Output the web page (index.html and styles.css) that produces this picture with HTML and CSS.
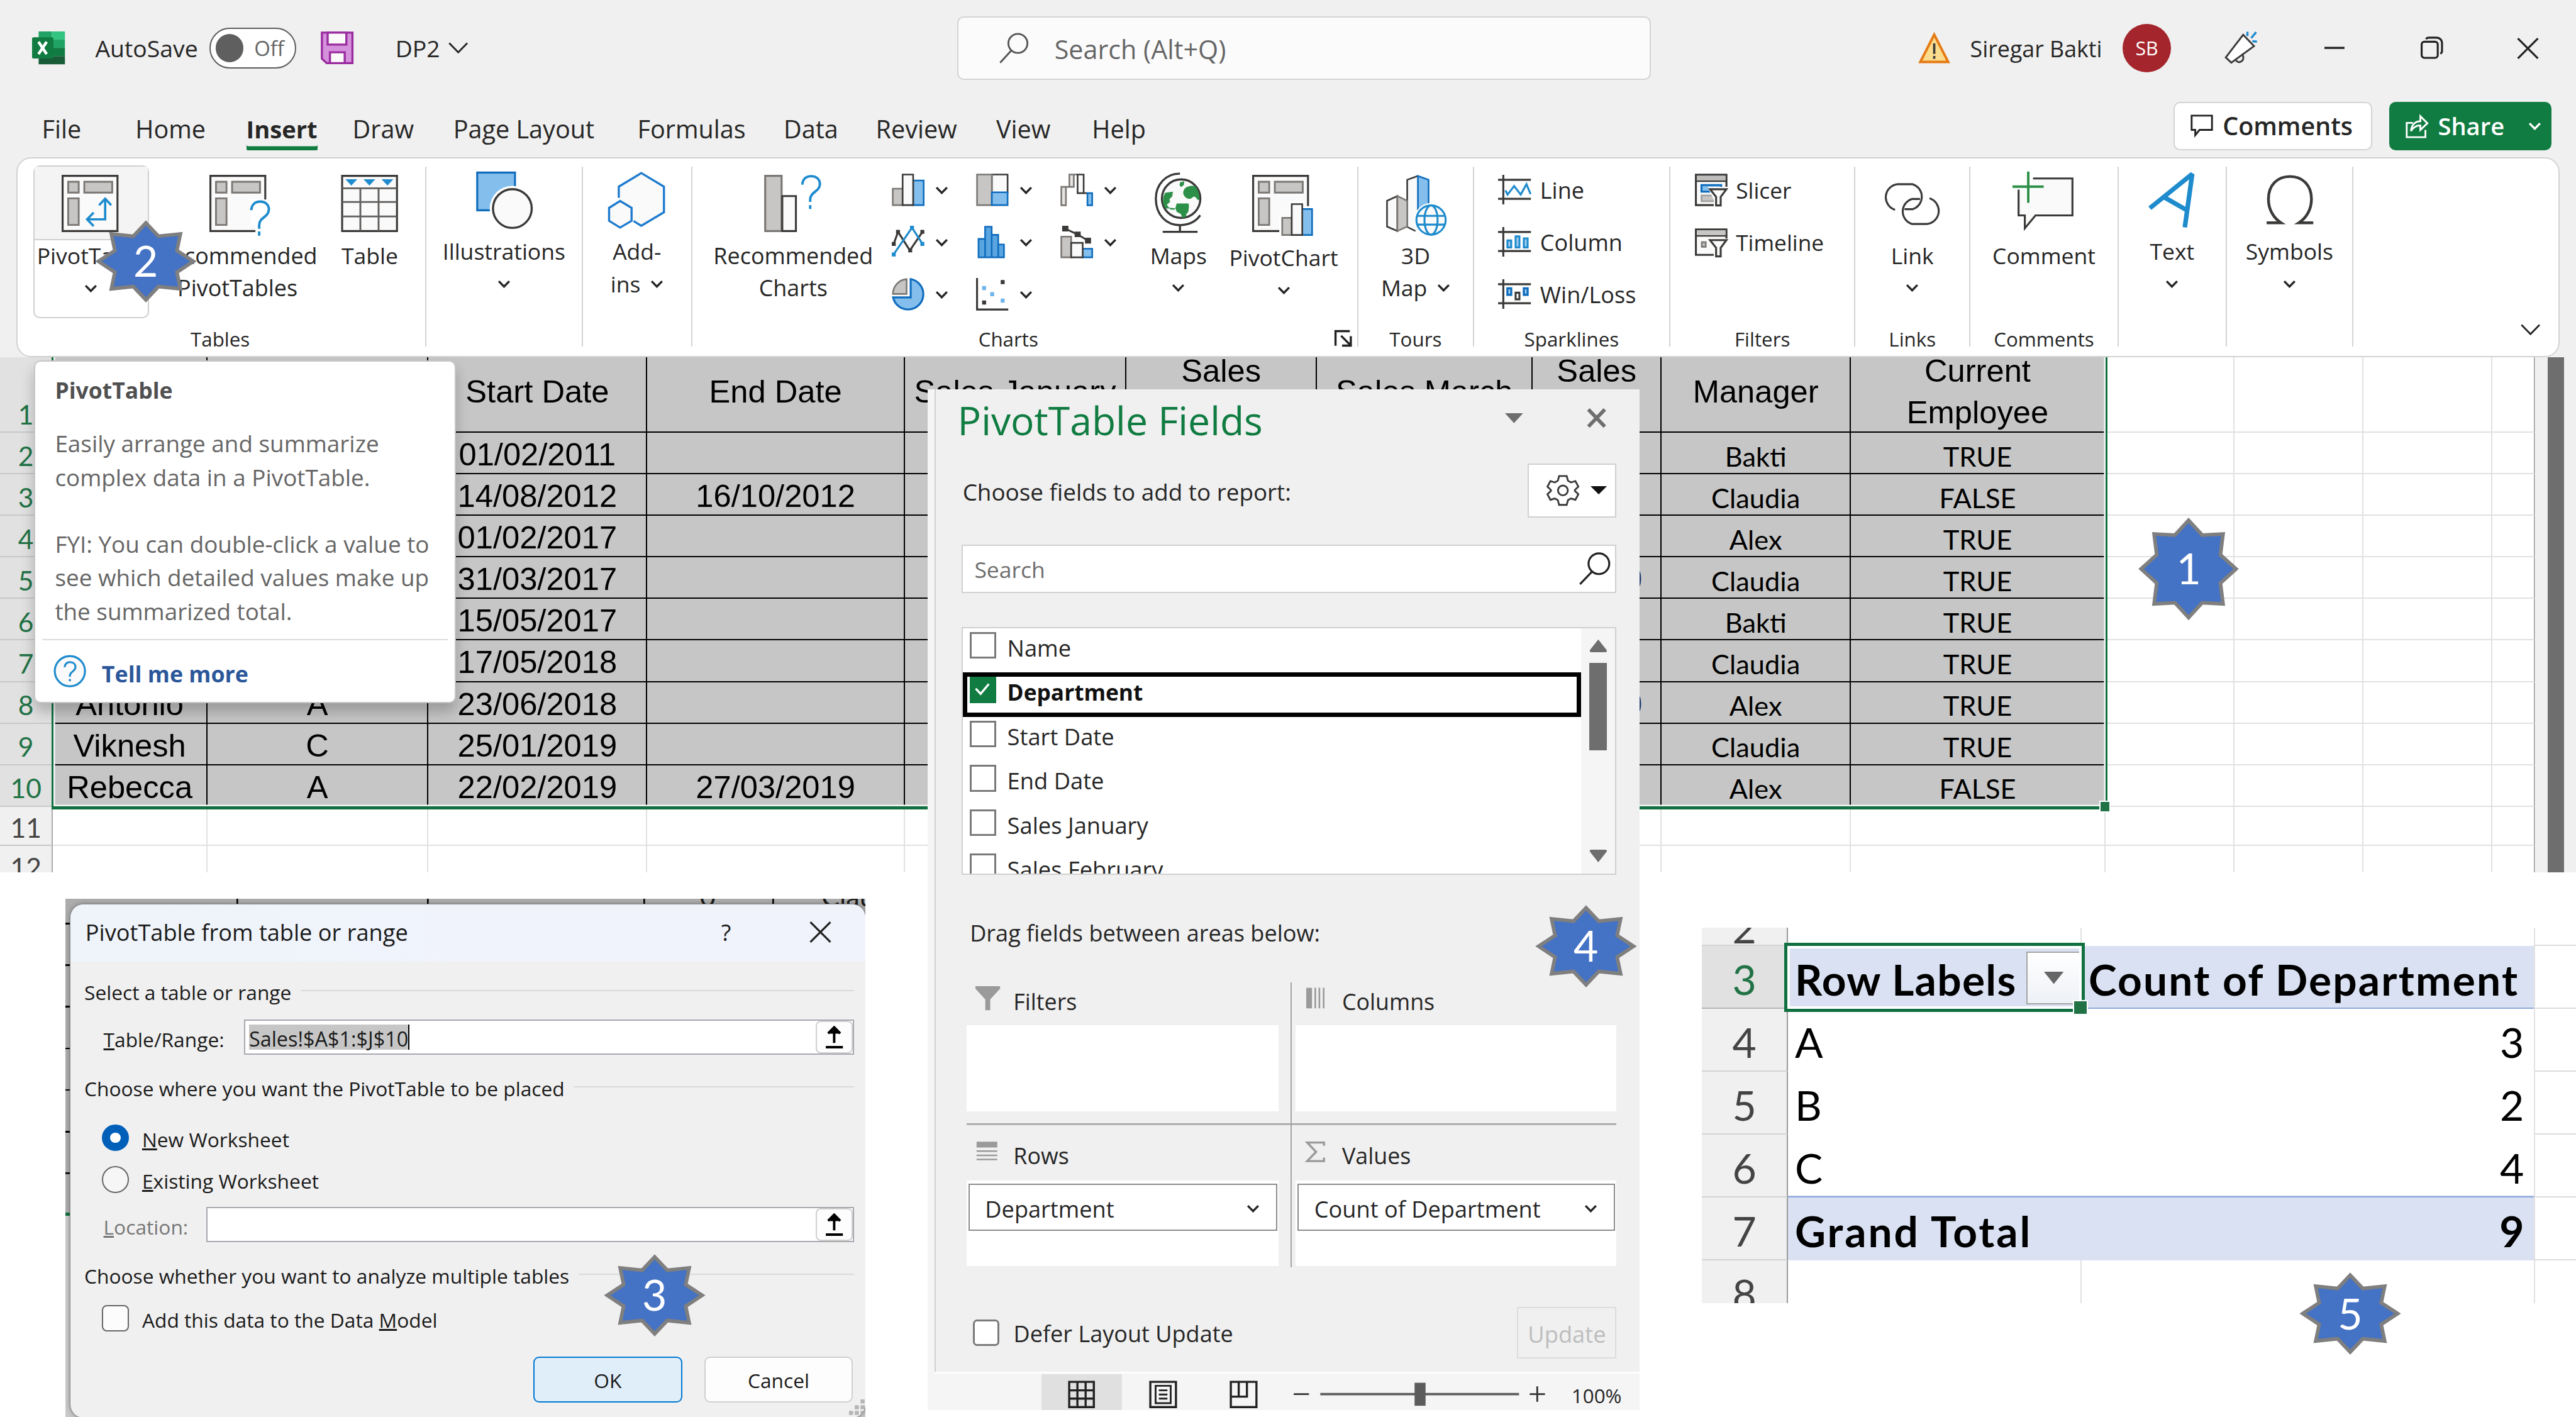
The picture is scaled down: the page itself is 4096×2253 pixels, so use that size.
FILE: index.html
```html
<!DOCTYPE html>
<html lang="en">
<head>
<meta charset="utf-8">
<title>DP2 - Excel</title>
<link rel="stylesheet" href="styles.css">
</head>
<body>
<svg class="defs" width="0" height="0">
  <symbol id="chev" viewBox="0 0 8 5"><path d="M.8.8 4 4.1 7.2.8" fill="none" stroke="currentColor" stroke-width="1.3"/></symbol>
  <symbol id="chev-lg" viewBox="0 0 12 7"><path d="M.5.6 6 6.2 11.5.6" fill="none" stroke="currentColor" stroke-width="1.1"/></symbol>
  <symbol id="star" viewBox="-31 -25.5 62 51"><polygon points="0,-23.4 7.7,-15.3 21,-16.7 18.9,-6.6 28.9,0 18.9,6.6 21,16.7 7.7,15.3 0,23.4 -7.7,15.3 -21,16.7 -18.9,6.6 -28.9,0 -18.9,-6.6 -21,-16.7 -7.7,-15.3" fill="#4472c4" stroke="#7f7f7f" stroke-width="2.2"/></symbol>
  <symbol id="star-tall" viewBox="-31 -32 62 64"><polygon points="0,-29.6 8.3,-20.6 21,-21.3 19.4,-8.6 28.9,0 19.4,8.6 21,21.3 8.3,20.6 0,29.6 -8.3,20.6 -21,21.3 -19.4,8.6 -28.9,0 -19.4,-8.6 -21,-21.3 -8.3,-20.6" fill="#4472c4" stroke="#7f7f7f" stroke-width="2.2"/></symbol>
  <symbol id="pivot" viewBox="0 0 38 38">
    <path d="M.6.6H34v33.6H.6z" fill="#fafafa" stroke="#3b3a39" stroke-width="1.2"/>
    <path d="M4 4.2h6.4v6.6H4zM13.8 4.2h17v6.6h-17zM4 14.3h6.4v16.2H4z" fill="#c8c6c4" stroke="#7a7774" stroke-width="1.1"/>
  </symbol>
  <symbol id="sum-arrow" viewBox="0 0 12 14"><path d="M5.9.8v9.6M2.2 4.6 5.9.9l3.7 3.7M.8 13h10.4" fill="none" stroke="#000" stroke-width="1.5"/><path d="M5.9.3 9.6 4.8H2.2z"/></symbol>
</svg>

<div class="app">
  <header class="titlebar">
    <svg width="20" height="20" viewBox="0 0 20 20"><path d="M4 0h8v5H4z" fill="#21a366"/><path d="M12 0h8v5h-8z" fill="#33c481"/><path d="M4 5h8v5H4z" fill="#107c41"/><path d="M12 5h8v5h-8z" fill="#21a366"/><path d="M4 10h8v5H4z" fill="#185c37"/><path d="M12 10h8v5h-8z" fill="#107c41"/><path d="M4 15h16v5H4z" fill="#185c37"/><rect y="3.5" width="13" height="13" rx="1" fill="#107c41"/><path d="m3.9 6.3 5 7.5M8.9 6.3l-5 7.5" stroke="#fff" stroke-width="1.7"/></svg>
    <span class="t-auto">AutoSave</span>
    <span class="toggle"><i></i><b>Off</b></span>
    <svg width="20" height="20" viewBox="0 0 20 20"><path d="M.7.7h18.6v18.6H3.6L.7 16.6z" fill="#d591dc" stroke="#9a2ca0" stroke-width="1.3"/><path d="M4.2.7h11.4V8H4.2zM5.6 19.3v-6.6h9v6.6z" fill="#fafafa" stroke="#9a2ca0" stroke-width="1.3"/></svg>
    <span class="t-auto">DP2</span>
    <svg width="12" height="7"><use href="#chev-lg"/></svg>
    <div class="search"><svg width="18" height="19" viewBox="0 0 18 19"><circle cx="11.3" cy="6.5" r="5.8"/><path d="M7.3 10.8.5 18.3"/></svg><span>Search (Alt+Q)</span></div>
    <svg width="19" height="19" viewBox="0 0 19 19"><path d="M9.4 1.2 17.9 17.8H.9z" fill="#fbdc8c" stroke="#e57a14" stroke-width="1.5"/><path d="M9.4 6.5v6.4M9.4 14.2v1.7" stroke="#3b3a39" stroke-width="1.4"/></svg>
    <span class="t-user">Siregar Bakti</span>
    <span class="avatar">SB</span>
    <svg width="21" height="21" viewBox="0 0 21 21" fill="none" stroke="#3b3a39" stroke-width="1.1"><path d="M11.4 2.4 18 9.3 4.2 19.4.8 16.2z" fill="#fff"/><path d="M6.8 17.5c1 2.4 4.6 1.9 4.7-1.2 0-1-.4-1.8-1-1.8"/><path d="M14 .6v2.6M19.3.8l-3 3.6M17 6.3l2.8.3" stroke="#1e8bcd" stroke-width="1.3"/></svg>
    <svg width="13" height="3" viewBox="0 0 13 3"><path d="M0 1.2h12.2" stroke="#222" stroke-width="1.3"/></svg>
    <svg width="14" height="14" viewBox="0 0 14 14" fill="none" stroke="#222" stroke-width="1.2"><rect x=".6" y="3.2" width="9.8" height="9.8" rx="1.6"/><path d="M3.2 1.6c.4-.6 1-.9 1.8-.9h4.6c2 0 3.4 1.4 3.4 3.4v4.7c0 .8-.4 1.4-1 1.7"/></svg>
    <svg width="14" height="13" viewBox="0 0 14 13"><path d="m.6.4 12.2 12.2M12.8.4.6 12.6" stroke="#222" stroke-width="1.2"/></svg>
  </header>

  <nav class="tabs">
    <a>File</a><a>Home</a><a class="on">Insert</a><a>Draw</a><a>Page Layout</a><a>Formulas</a><a>Data</a><a>Review</a><a>View</a><a>Help</a>
    <button class="btn-comments"><svg width="14" height="14" viewBox="0 0 14 14"><path d="M.7.7h12.4v8.700H5.5L2.900 12.600V9.400H.7z" fill="none" stroke="#222" stroke-width="1.1"/></svg>Comments</button>
    <button class="btn-share"><svg width="14" height="15" viewBox="0 0 14 15" fill="none" stroke="#fff" stroke-width="1.1"><path d="M4.5 5.5H.7v8.7h11.4V9.8"/><path d="M3.3 10.5C3.600 6.700 5.700 4.600 9 4.500V1.400L13.300 5.700 9 9.800V7.100C6.500 7 4.700 8.200 3.300 10.500z"/></svg><span>Share</span><svg width="8" height="5"><use href="#chev"/></svg></button>
  </nav>

  <section class="ribbon">
    <div class="group g-tables">
      <div class="items">
        <div class="big split"><div class="ico"><svg width="38" height="38"><use href="#pivot"/></svg><svg class="over" width="38" height="38" viewBox="0 0 38 38"><path d="M26.5 14.5v12.6H15.8M22.8 18.5l3.7-4 3.7 4M19.5 23l-4 4.1 4 4.1" fill="none" stroke="#1e8bcd" stroke-width="1.4"/></svg></div><p>PivotTable</p><p><svg width="8" height="5"><use href="#chev"/></svg></p></div>
        <div class="big w100"><div class="ico shift"><svg width="38" height="38" viewBox="0 0 38 38"><use href="#pivot"/><path d="M25 15h13v23H28v-8h-3z" fill="#fff"/><path d="M25.5 21.500c.2-3.200 2.200-5.200 5.400-5.200 3.300 0 5.300 2 5.300 4.800 0 4.700-5.900 4.700-5.900 9.400v2.300M30.300 34.500v2.500" fill="none" stroke="#1e8bcd" stroke-width="1.5"/></svg></div><p>Recommended</p><p>PivotTables</p></div>
        <div class="big w41"><div class="ico"><svg width="38" height="38" viewBox="-1.7 0 38 38"><path d="M.6.6h33.4v33.6H.6z" fill="#fafafa" stroke="#3b3a39" stroke-width="1.2"/><path d="M.6 8.2H34M.6 16.5H34M.6 25.3H34M11.7 8.2v26M22.8 8.2v26" stroke="#605e5c" stroke-width="1.1"/><path d="M2.6 2.7h7.2L6.2 6.5zM13.6 2.7h7.2l-3.6 3.8zM24.6 2.7h7.2l-3.6 3.8z" fill="#1e8bcd"/></svg></div><p>Table</p></div>
      </div>
      <div class="label">Tables</div>
    </div>
    <div class="group g-ill high"><div class="items">
      <div class="big w90"><div class="ico"><svg width="38" height="38" viewBox="-2 2 38 38"><path d="M.6.6h23v23H.6z" fill="#83beec" stroke="#0f6cbd" stroke-width="1.2"/><circle cx="22" cy="22.5" r="13.8" fill="#fff"/><circle cx="22" cy="22.5" r="11.8" fill="#fafafa" stroke="#3b3a39" stroke-width="1.3"/></svg></div><p>Illustrations</p><p><svg width="8" height="5"><use href="#chev"/></svg></p></div>
    </div></div>
    <div class="group g-add high"><div class="items">
      <div class="big w60"><div class="ico"><svg width="38" height="38" viewBox="-1.5 2 38 38"><path d="M6.5 16V9.2L20.2.9 34 9.2v15.6L20.2 33l-4.7-2.9" fill="#fafafa" stroke="#1e7bcd" stroke-width="1.3"/><path d="M7.3 17.9l7 4.2v7.9l-7 4.1-6.7-4.1v-7.900z" fill="#fafafa" stroke="#1e7bcd" stroke-width="1.3"/></svg></div><p>Add-</p><p>ins <svg width="8" height="5"><use href="#chev"/></svg></p></div>
    </div></div>
    <div class="group g-charts">
      <div class="items">
        <div class="big w100"><div class="ico"><svg width="38" height="38" viewBox="-1.2 0 38 38"><path d="M.6.6h10v33.6H.6z" fill="#c8c6c4" stroke="#7a7774" stroke-width="1.2"/><path d="M11 12.9h8.3v21.3H11z" fill="#fafafa" stroke="#3b3a39" stroke-width="1.2"/><path d="M23.2 6c.2-3.200 2.200-5.200 5.400-5.200 3.300 0 5.300 2 5.300 4.800 0 4.700-5.900 4.700-5.900 9.400v1.500M28 18.500v2.300" fill="none" stroke="#1e8bcd" stroke-width="1.5"/></svg></div><p>Recommended</p><p>Charts</p></div>
        <div class="smalls">
          <span><svg width="20" height="20" viewBox="0 0 20 20"><path d="M.6 9.2h6v10h-6z" fill="#c8c6c4" stroke="#7a7774"/><path d="M13 4.2h6.4v15H13z" fill="#83beec" stroke="#0f6cbd"/><path d="M6.6.6H13v18.6H6.6z" fill="#fafafa" stroke="#3b3a39"/></svg><svg width="8" height="5"><use href="#chev"/></svg></span>
          <span><svg width="20" height="20" viewBox="0 0 20 20"><path d="M9.6.6h9.6v11H9.6z" fill="#fafafa" stroke="#3b3a39"/><path d="M.6.6h9v18.6h-9z" fill="#c8c6c4" stroke="#7a7774"/><path d="M9.6 11.4h9.6v7.8H9.6z" fill="#83beec" stroke="#0f6cbd"/></svg><svg width="8" height="5"><use href="#chev"/></svg></span>
          <span><svg width="20" height="20" viewBox="0 0 20 20"><path d="M.6 8.1h2.8v11.200H.6zM5.500.6h2.700v7.500H5.500z" fill="#e6e5e4" stroke="#7a7774"/><path d="M3.400 8.100h2.100M8.200.6h2.200" stroke="#7a7774"/><path d="M10.500.6h3.700v11.300h-3.700z" fill="#fafafa" stroke="#3b3a39"/><path d="M14.200 11.900h2.200" stroke="#3b3a39"/><path d="M16.500 11.900h2.900v7.400h-2.900z" fill="#83beec" stroke="#0f6cbd"/></svg><svg width="8" height="5"><use href="#chev"/></svg></span>
          <span><svg width="20" height="20" viewBox="0 0 20 20"><path d="M1.200 11 3.800 3.700 11 15 18.700 3.700" fill="none" stroke="#3b3a39" stroke-width="1.2"/><path d="M1.200 17.300 12.300 1.200 18.700 11" fill="none" stroke="#1e8bcd" stroke-width="1.2"/><path d="M0 9.900h2.400v2.400H0zM2.600 2.500H5v2.400H2.600zM10 13.800h2.400v2.400H10zM17.400 2.500h2.400v2.400h-2.400z" fill="#3b3a39"/><path d="M0 16.300h2.400v2.400H0zM11.100 0h2.400v2.400h-2.400zM17.400 9.900h2.400v2.400h-2.400z" fill="#1e8bcd"/></svg><svg width="8" height="5"><use href="#chev"/></svg></span>
          <span><svg width="20" height="20" viewBox="0 0 20 20"><path d="M1.500 8h4v11.2h-4zM5.500.6h4v18.600h-4zM9.500 5.500h4v13.700h-4zM13.500 11.400H17v7.800h-3.500z" fill="#5aa5e0" stroke="#0f6cbd"/></svg><svg width="8" height="5"><use href="#chev"/></svg></span>
          <span><svg width="20" height="20" viewBox="0 0 20 20"><path d="M.6 6.600h6v12.600h-6z" fill="#c8c6c4" stroke="#7a7774"/><path d="M13.600 14h5.800v5.200h-5.800z" fill="#83beec" stroke="#0f6cbd"/><path d="M6.600 10.400h7v8.800h-7z" fill="#fafafa" stroke="#3b3a39"/><path d="M3 1.700l7.500 3.600 6.300 3.700" fill="none" stroke="#3b3a39" stroke-width="1.1"/><path d="M1.100 0h3.800v3.400H1.100zM8.700 3.500h3.700v3.400H8.700zM15 7.300h3.700v3.500H15z" fill="#3b3a39"/></svg><svg width="8" height="5"><use href="#chev"/></svg></span>
          <span><svg width="20" height="20" viewBox="0 0 20 20"><path d="M9 .7A9 9 0 0 0 .7 9.700H9z" fill="#c8c6c4" stroke="#7a7774"/><path d="M11.500.7a9.300 9.300 0 1 1-10.700 11.100h10.700z" fill="#83beec" stroke="#0f6cbd" stroke-width="1.2"/></svg><svg width="8" height="5"><use href="#chev"/></svg></span>
          <span><svg width="20" height="20" viewBox="0 0 20 20"><path d="M.6 0v19.200h19" fill="none" stroke="#3b3a39" stroke-width="1.2"/><path d="M3.700 13.700h2.400v2.500H3.700zM15 1.200h2.400v2.500H15z" fill="#3b3a39"/><path d="M3.700 4.900h2.400v2.500H3.700zM8.600 8.600H11v2.500H8.600zM15 12.500h2.400V15H15z" fill="#6fb4ea"/></svg><svg width="8" height="5"><use href="#chev"/></svg></span>
        </div>
        <div class="big w40"><div class="ico"><svg width="38" height="38" viewBox="-4.5 0 38 38"><path d="M15.5-.7C7-1 .8 6 .8 14.500c0 10 6.500 16.300 15 16.100 5.500-.2 9.500-2.300 12-6" fill="none" stroke="#3b3a39" stroke-width="1.3"/><circle cx="16.200" cy="14.500" r="11.700" fill="#fafafa" stroke="#3b3a39" stroke-width="1.300"/><path d="M20.300 7.200c1.700-.7 3.500-.7 4.700-.1 1.500 2 2.400 4.800 2.400 7.800l-.9.500c-.8-.9-1.500-2-2.300-2.200-1.300.3-1.700 1.500-3 1.400-1.800 0-2.900-1.300-3.600-2.700-.4-2 .6-4.200 2.700-4.700zM15.600 4.500l2.500-.6-.2 2.200-1.700 1.400-1-1.300zM6.500 10.900l4.700-.7-.4 2.900-1.700 1.700.4 1.700-2 1.700.8 1.100 1.300 1.200H7c-1.300-1-2-3-1.800-5 0-1.700.5-3.300 1.300-4.600zM9.500 20l3 .4v.8h-3zM13.500 17.400h7.200l.3 1.700-.4 3.400-1.100 1.200-.4 2-2.100.5-1-2.400-2.500-1.300-.8-2.300z" fill="#2d9048"/><path d="M15.500 31v3.800M5 34.700h21.200" stroke="#3b3a39" stroke-width="1.300"/></svg></div><p>Maps</p><p><svg width="8" height="5"><use href="#chev"/></svg></p></div>
        <div class="big w68 low"><div class="ico"><svg width="38" height="38" viewBox="0 0 38 38"><use href="#pivot"/><path d="M16.500 25h6v-9h9v3h6v19h-21z" fill="#fff"/><path d="M18.300 26.200h5.800v10.400h-5.800z" fill="#c8c6c4" stroke="#7a7774"/><path d="M30.500 20.800h6v15.800h-6z" fill="#83beec" stroke="#0f6cbd"/><path d="M24.100 17.800h6.400v18.800h-6.400z" fill="#fafafa" stroke="#3b3a39"/></svg></div><p>PivotChart</p><p><svg width="8" height="5"><use href="#chev"/></svg></p></div>
      </div>
      <div class="label">Charts</div>
      <svg class="launch" width="11" height="10" viewBox="0 0 11 10"><path d="M.6 9.500V.6h8.700M4 3.400l5.400 5.400M9.900 3.600v5.800H4.600" fill="none" stroke="#222" stroke-width="1.300"/></svg>
    </div>
    <div class="group g-tours">
      <div class="items"><div class="big w60"><div class="ico"><svg width="38" height="38" viewBox="-1 0 38 38"><path d="M.7 15.800 7 12.900v21.300L.7 31.500z" fill="#fafafa" stroke="#3b3a39"/><path d="M13 3 19.500.7V34L13 31.500z" fill="#fafafa" stroke="none"/><path d="M19.500.7 13 3v28.700l5 2.500" fill="none" stroke="#3b3a39"/><path d="M7 12.900l6 2.900v15.700l-6 2.700z" fill="#c8c6c4" stroke="#7a7774"/><path d="M19.500.7 26 3v18.500h-6.500z" fill="#83beec" stroke="#0f6cbd"/><circle cx="27.500" cy="27.300" r="10.200" fill="#fff"/><g fill="#fafafa" stroke="#1e8bcd" stroke-width="1.200"><circle cx="27.500" cy="27.500" r="8.900"/><ellipse cx="27.500" cy="27.500" rx="4" ry="8.900"/><path d="M19.200 25h16.600M19.200 30.300h16.600" fill="none"/></g></svg></div><p>3D</p><p>Map <svg width="8" height="5"><use href="#chev"/></svg></p></div></div>
      <div class="label">Tours</div>
    </div>
    <div class="group g-spark">
      <div class="items rows">
        <span><svg width="20" height="18" viewBox="0 0 20 18"><path d="M3.200 0v18M0 3h20M0 14.600h20" stroke="#3b3a39" stroke-width="1.200"/><path d="m4.500 9.500 1.300 2.500 4-5.200 4 5.200 3.500-6.300 2.500 6" fill="none" stroke="#1e8bcd" stroke-width="1.200"/></svg>Line</span>
        <span><svg width="20" height="18" viewBox="0 0 20 18"><path d="M3.200 0v18M0 3h20M0 14.600h20" stroke="#3b3a39" stroke-width="1.200"/><path d="M5.700 8.200H8v4.200H5.700zM10.700 5.700H13v6.700h-2.300zM15.700 6.900H18v5.500h-2.300z" fill="#a5d0ee" stroke="#1e8bcd" stroke-width="1.200"/></svg>Column</span>
        <span><svg width="20" height="18" viewBox="0 0 20 18"><path d="M3.200 0v18M0 3h20M0 14.600h20" stroke="#3b3a39" stroke-width="1.200"/><path d="M5.700 5.500H8v4H5.700zM15.700 5.500H18v4h-2.300z" fill="#a5d0ee" stroke="#0f6cbd" stroke-width="1.300"/><path d="M10.700 8.200H13v4h-2.300z" fill="none" stroke="#3b3a39" stroke-width="1.200"/></svg>Win/Loss</span>
      </div>
      <div class="label">Sparklines</div>
    </div>
    <div class="group g-filters">
      <div class="items rows">
        <span><svg width="20" height="20" viewBox="0 0 20 20"><path d="M.6.7h18.600v18.500H.6z" fill="#fafafa" stroke="#3b3a39" stroke-width="1.200"/><path d="M1.200 1.300h17.400v2.700H1.200z" fill="#c0bebc"/><path d="M.6 4.600h18.600" stroke="#3b3a39"/><path d="M4 7h12v4H4z" fill="#83beec" stroke="#0f6cbd" stroke-width="1.200"/><path d="M4 13.300h9v3.500H4z" fill="#c8c6c4" stroke="#a19f9d"/><path d="M8 8.700V8h12v12h-8.500v-4z" fill="#fff"/><path d="M9.200 9.500h10l-3.500 4.700v5.200h-2.800v-5.200z" fill="#fafafa" stroke="#3b3a39" stroke-width="1.200"/></svg>Slicer</span>
        <span><svg width="20" height="20" viewBox="0 -1.500 20 20"><path d="M.6.7h18.600v15.500H.6z" fill="#fafafa" stroke="#3b3a39" stroke-width="1.200"/><path d="M1.200 1.300h17.400v2.700H1.200z" fill="#c8c6c4"/><path d="M.6 4.600h18.600" stroke="#3b3a39"/><path d="M4.200 8.500h2.400v2.800H4.200z" fill="#c8c6c4" stroke="#7a7774"/><path d="M8 6.300h12V18.500h-8.500v-4z" fill="#fff"/><path d="M9.200 7.200h10l-3.500 4.700v5.200h-2.800v-5.200z" fill="#fafafa" stroke="#3b3a39" stroke-width="1.200"/></svg>Timeline</span>
      </div>
      <div class="label">Filters</div>
    </div>
    <div class="group g-links">
      <div class="items"><div class="big w60"><div class="ico"><svg width="38" height="38" viewBox="-1.500 0 38 38" fill="none" stroke="#3b3a39" stroke-width="1.200"><path d="M7 21.300A8 8 0 0 1 8.600 5.700h9.200a8 8 0 0 1 0 15.200h-5"/><path d="M28 14.300a8 8 0 0 1-1.600 15.600h-9.200a8 8 0 0 1 0-15.200h5"/></svg></div><p>Link</p><p><svg width="8" height="5"><use href="#chev"/></svg></p></div></div>
      <div class="label">Links</div>
    </div>
    <div class="group g-comm">
      <div class="items"><div class="big w80"><div class="ico"><svg width="38" height="38" viewBox="0 2 38 38"><path d="M12.500 4.200h24v22.500H14L7.500 34.500v-7.800H3.700V10" fill="#fafafa" stroke="#3b3a39" stroke-width="1.200"/><path d="M9.600 0v19M0 9.200h19" stroke="#fff" stroke-width="3.500"/><path d="M9.600 0v19M0 9.200h19" stroke="#2d9048" stroke-width="1.500"/></svg></div><p>Comment</p></div></div>
      <div class="label">Comments</div>
    </div>
    <div class="group g-text high"><div class="items">
      <div class="big w60"><div class="ico"><svg width="38" height="38" viewBox="-4.500 2 38 38"><path d="M1 22.300 26.800 1.500 22.300 34M9.500 15.500l14 8" fill="none" stroke="#1e8bcd" stroke-width="2.800" stroke-linejoin="bevel"/></svg></div><p>Text</p><p><svg width="8" height="5"><use href="#chev"/></svg></p></div>
    </div></div>
    <div class="group g-sym high"><div class="items">
      <div class="big w70"><div class="ico"><svg width="38" height="38" viewBox="-5 0 38 38"><path d="M0 29.200h8.800C4.200 26.300 1.100 21 1.100 14.700 1.100 6.300 6.500 1 14.200 1s13.100 5.300 13.100 13.700c0 6.300-3.100 11.600-7.700 14.500h8.800" fill="none" stroke="#3b3a39" stroke-width="1.700"/></svg></div><p>Symbols</p><p><svg width="8" height="5"><use href="#chev"/></svg></p></div>
    </div></div>
    <svg class="collapse" width="12" height="7"><use href="#chev-lg"/></svg>
  </section>

  <main class="sheet">
    <div class="row head"><i>1</i><b></b><b></b><b>Start Date</b><b>End Date</b><b>Sales January</b><b>Sales<br>February</b><b>Sales March</b><b>Sales<br>April</b><b>Manager</b><b>Current<br>Employee</b><u></u><u></u><u></u><u></u></div>
    <div class="row"><i>2</i><b></b><b></b><b>01/02/2011</b><b></b><b></b><b></b><b></b><b></b><em>Bakti</em><em>TRUE</em><u></u><u></u><u></u><u></u></div>
    <div class="row"><i>3</i><b></b><b></b><b>14/08/2012</b><b>16/10/2012</b><b></b><b></b><b></b><b></b><em>Claudia</em><em>FALSE</em><u></u><u></u><u></u><u></u></div>
    <div class="row"><i>4</i><b></b><b></b><b>01/02/2017</b><b></b><b></b><b></b><b></b><b></b><em>Alex</em><em>TRUE</em><u></u><u></u><u></u><u></u></div>
    <div class="row"><i>5</i><b></b><b></b><b>31/03/2017</b><b></b><b></b><b></b><b></b><b class="num">0</b><em>Claudia</em><em>TRUE</em><u></u><u></u><u></u><u></u></div>
    <div class="row"><i>6</i><b></b><b></b><b>15/05/2017</b><b></b><b></b><b></b><b></b><b></b><em>Bakti</em><em>TRUE</em><u></u><u></u><u></u><u></u></div>
    <div class="row"><i>7</i><b></b><b></b><b>17/05/2018</b><b></b><b></b><b></b><b></b><b></b><em>Claudia</em><em>TRUE</em><u></u><u></u><u></u><u></u></div>
    <div class="row"><i>8</i><b>Antonio</b><b>A</b><b>23/06/2018</b><b></b><b></b><b></b><b></b><b class="num">0</b><em>Alex</em><em>TRUE</em><u></u><u></u><u></u><u></u></div>
    <div class="row"><i>9</i><b>Viknesh</b><b>C</b><b>25/01/2019</b><b></b><b></b><b></b><b></b><b></b><em>Claudia</em><em>TRUE</em><u></u><u></u><u></u><u></u></div>
    <div class="row"><i>10</i><b>Rebecca</b><b>A</b><b>22/02/2019</b><b>27/03/2019</b><b></b><b></b><b></b><b></b><em>Alex</em><em>FALSE</em><u></u><u></u><u></u><u></u></div>
    <div class="row empty"><i>11</i><u></u><u></u><u></u><u></u><u></u><u></u><u></u><u></u><u></u><u></u><u></u><u></u><u></u><u></u></div>
    <div class="row empty"><i>12</i><u></u><u></u><u></u><u></u><u></u><u></u><u></u><u></u><u></u><u></u><u></u><u></u><u></u><u></u></div>
    <div class="sel"><span></span></div>
    <div class="vscroll"><span></span></div>
  </main>
</div>

<aside class="tip">
  <h4>PivotTable</h4>
  <p>Easily arrange and summarize<br>complex data in a PivotTable.</p>
  <p>FYI: You can double-click a value to<br>see which detailed values make up<br>the summarized total.</p>
  <div class="more"><svg width="20" height="20" viewBox="0 0 20 20" fill="none" stroke="#1e8bcd" stroke-width="1.200"><circle cx="10" cy="10" r="9.200" fill="#fafafa"/><path d="M6.800 7.600c.2-2 1.400-3.100 3.300-3.100 2 0 3.300 1.200 3.300 3 0 2.700-3.400 2.700-3.400 5.400v.5M10 14.700v1.500"/></svg><span>Tell me more</span></div>
</aside>

<aside class="pane">
  <div class="body">
    <div class="p-title"><h2>PivotTable Fields</h2><svg width="11" height="6" viewBox="0 0 11 6"><path d="M0 0h11L5.500 6z" fill="#6e6e6e"/></svg><svg width="12" height="12" viewBox="0 0 12 12"><path d="m1 .8 10 10.400M11 .8 1 11.200" stroke="#6e6e6e" stroke-width="2.200"/></svg></div>
    <div class="p-choose"><span>Choose fields to add to report:</span><button><svg width="20" height="19" viewBox="-10 -9.500 20 19" fill="none" stroke="#3b3a39" stroke-width="1.100"><path d="M-2.300-8.800h4.600l.8 2.900 1.800 1 2.700-.8L9.400-2.300 7.300-.3v.6l2.100 2-1.800 3.400-2.700-.8-1.800 1-.8 2.900h-4.600l-.8-2.900-1.800-1-2.700.8-1.800-3.400 2.100-2v-.6l-2.100-2 1.800-3.400 2.700.8 1.800-1z"/><circle r="3"/></svg><svg width="10" height="5" viewBox="0 0 10 5"><path d="M0 0h10L5 5z" fill="#111"/></svg></button></div>
    <div class="p-search"><span>Search</span><svg width="19" height="20" viewBox="0 0 19 20"><circle cx="12" cy="7" r="6.300"/><path d="M7.800 11.800.5 19.500"/></svg></div>
    <div class="p-list">
      <ul><li><i></i>Name</li><li class="on"><i><svg width="16" height="16" viewBox="0 0 16 16"><path d="m4 7.600 3 3.200 5-6" fill="none" stroke="#fff" stroke-width="1.300"/></svg></i>Department</li><li><i></i>Start Date</li><li><i></i>End Date</li><li><i></i>Sales January</li><li><i></i>Sales February</li></ul>
      <div class="bar"><svg width="11" height="8" viewBox="0 0 11 8"><path d="M5.500.3 10.800 7 10.300 8H.7L.2 7z" fill="#6e6e6e"/></svg><span></span><svg width="11" height="8" viewBox="0 0 11 8"><path d="M5.500 7.700 10.800 1 10.300 0H.7L.2 1z" fill="#6e6e6e"/></svg></div>
    </div>
    <div class="p-drag">Drag fields between areas below:</div>
    <div class="areas">
      <div class="area"><h5><svg width="15" height="15" viewBox="0 0 15 15"><path d="M0 0h15v1.500L9 8v6.600H6V8L0 1.500z" fill="#9a9a9a"/></svg>Filters</h5><div class="drop"></div></div>
      <div class="area right"><h5><svg width="15" height="15" viewBox="0 0 15 15"><path d="M0 1h3.500v12.500H0z" fill="#9a9a9a"/><path d="M5.500 1v12.500M8 1v12.500M10.600 1v12.500" stroke="#9a9a9a" stroke-width="1"/></svg>Columns</h5><div class="drop"></div></div>
      <div class="area"><h5><svg width="15" height="15" viewBox="-.7 0 15 15"><path d="M0 .5h12.600V4H0z" fill="#9a9a9a"/><path d="M0 6.200h12.600M0 8.800h12.600M0 11.300h12.600" stroke="#9a9a9a" stroke-width="1"/></svg>Rows</h5><div class="drop"><div class="chip">Department<svg width="8" height="5"><use href="#chev"/></svg></div></div></div>
      <div class="area right"><h5><svg width="15" height="15" viewBox="0 0 15 15"><path d="M10.800 3V1H.6L6 6.700.6 12.300h10.200v-2.200" fill="none" stroke="#9a9a9a" stroke-width="1.300"/></svg>Values</h5><div class="drop"><div class="chip">Count of Department<svg width="8" height="5"><use href="#chev"/></svg></div></div></div>
    </div>
    <div class="p-defer"><i></i><span>Defer Layout Update</span><button>Update</button></div>
  </div>
  <footer class="status">
    <span class="view on"><svg width="17" height="17" viewBox="0 0 17 17"><path d="M.8.8h15v15.400h-15zM.8 6h15M.8 11h15M5.800.8v15.400M10.800.8v15.400" fill="none" stroke="#222" stroke-width="1.300"/></svg></span>
    <span class="view"><svg width="17" height="17" viewBox="0 0 17 17"><path d="M.8.8h15.600v15.400H.8z" fill="none" stroke="#222" stroke-width="1.300"/><path d="M4 3.200h9.200v10.600H4zM6 6h5.200M6 8.500h5.200M6 11h5.200" fill="none" stroke="#222" stroke-width="1.100"/></svg></span>
    <span class="view"><svg width="17" height="17" viewBox="0 0 17 17"><path d="M.8.8h15.600v15.400H.8zM.8 9.800h9.800v-9M5.600.8v9" fill="none" stroke="#222" stroke-width="1.300"/></svg></span>
    <svg class="zoomer" width="154" height="16" viewBox="0 0 154 16"><path d="M0 7.500h9.300M143.700 7.500h9.300M148.300 2.800v9.400" stroke="#333" stroke-width="1.100"/><path d="M16.200 7.500h121" stroke="#5c5c5c" stroke-width="1.500"/><path d="M73.600.6h6.700v14h-6.700z" fill="#5c5c5c"/></svg>
    <span class="pct">100%</span>
  </footer>
</aside>

<div class="dlg-wrap">
  <div class="strip-top"><span>0</span><span>Claudia</span></div>
  <div class="dlg">
    <div class="d-title"><span>PivotTable from table or range</span><span>?</span><svg width="14" height="13" viewBox="0 0 14 13"><path d="m.6.4 12.200 12.200M12.800.4.6 12.600" stroke="#222" stroke-width="1.200"/></svg></div>
    <h6 class="s1">Select a table or range</h6>
    <div class="field f1"><label><u>T</u>able/Range:</label><div class="input"><mark>Sales!$A$1:$J$10</mark><button><svg width="12" height="14"><use href="#sum-arrow"/></svg></button></div></div>
    <h6 class="s2">Choose where you want the PivotTable to be placed</h6>
    <div class="opt o1"><i class="radio on"></i><span><u>N</u>ew Worksheet</span></div>
    <div class="opt o2"><i class="radio"></i><span><u>E</u>xisting Worksheet</span></div>
    <div class="field f2"><label><u>L</u>ocation:</label><div class="input"><button><svg width="12" height="14"><use href="#sum-arrow"/></svg></button></div></div>
    <h6 class="s3">Choose whether you want to analyze multiple tables</h6>
    <div class="opt o3"><i class="check"></i><span>Add this data to the Data <u>M</u>odel</span></div>
    <div class="acts"><button class="ok">OK</button><button>Cancel</button></div>
    <svg class="grip" width="10" height="10" viewBox="0 0 10 10"><path d="M7 0h2.500v2.500H7zM3.500 3.500H6V6H3.500zM7 3.500h2.500V6H7zM0 7h2.500v2.500H0zM3.500 7H6v2.500H3.500zM7 7h2.500v2.500H7z" fill="#b5b5b5"/></svg>
  </div>
</div>

<div class="result">
  <div class="r r2"><i>2</i><b></b><b></b><s></s></div>
  <div class="r hd"><i class="g">3</i><b>Row Labels</b><b>Count of Department</b><s></s></div>
  <div class="r"><i>4</i><b>A</b><b>3</b><s></s></div>
  <div class="r"><i>5</i><b>B</b><b>2</b><s></s></div>
  <div class="r"><i>6</i><b>C</b><b>4</b><s></s></div>
  <div class="r tot"><i>7</i><b>Grand Total</b><b>9</b><s></s></div>
  <div class="r lined"><i>8</i><b></b><b></b><s></s></div>
  <div class="cell-sel"><div class="dd"><svg width="12" height="8" viewBox="0 0 12 8"><path d="M0 0h12L6 7.500z" fill="#666"/></svg></div><span></span></div>
</div>

<div class="badge n1"><svg width="62" height="64"><use href="#star-tall"/></svg><span>1</span></div>
<div class="badge n2"><svg width="62" height="51"><use href="#star"/></svg><span>2</span></div>
<div class="badge n3"><svg width="62" height="51"><use href="#star"/></svg><span>3</span></div>
<div class="badge n4"><svg width="62" height="51"><use href="#star"/></svg><span>4</span></div>
<div class="badge n5"><svg width="62" height="51"><use href="#star"/></svg><span>5</span></div>
</body>
</html>
```

FILE: styles.css
```css
* { box-sizing: border-box; margin: 0; padding: 0; }
html { background: #fff; overflow: hidden; }
body {
  zoom: 2.61224;
  position: relative;
  width: 1568px;
  height: 862.4px;
  overflow: hidden;
  background: #fff;
  font-family: "Open Sans", "Noto Sans", sans-serif;
  font-size: 13.6px;
  color: #262626;
  white-space: nowrap;
}
button { font: inherit; color: inherit; border: 0; background: none; }
svg { display: block; flex: none; overflow: visible; }
.defs { position: absolute; }
i, em { font-style: normal; }
b { font-weight: 400; }
ul { list-style: none; }

.app { background: #f0f0f0; height: 530.8px; overflow: hidden; }

/* title bar */
.titlebar {
  height: 58px;
  display: grid;
  align-items: center;
  padding-top: .6px;
  padding-left: 19.4px;
  grid-template-columns: 38.6px 69.5px 67.8px 45.4px 32.3px 309.5px 585.3px 31.4px 92.8px 62px 61px 58.3px 58.9px auto;
}
.t-auto { font-size: 14.3px; }
.t-user { font-size: 13.7px; }
.toggle {
  width: 53px; height: 24.7px; border: 1px solid #5c5c5c; border-radius: 12.4px; background: #fff;
  display: flex; align-items: center; padding-left: 3px; color: #666;
}
.toggle i { width: 17px; height: 17px; border-radius: 50%; background: #5f5f5f; margin-right: 6.5px; }
.toggle b { font-size: 12.6px; }
.search {
  width: 422.4px; height: 38.7px; border: 1px solid #d4d4d4; border-radius: 4px; background: #fbfbfb;
  display: flex; align-items: center; gap: 15.6px; padding-left: 25px; font-size: 15.8px; color: #666;
}
.search span { margin-top: 1.5px; }
.search svg, .p-search svg { fill: none; stroke: #555; stroke-width: 1.1; }
.avatar {
  width: 29.5px; height: 29.5px; border-radius: 50%; background: #a4262c; color: #fff;
  font-size: 11.6px; display: flex; align-items: center; justify-content: center;
}

/* tabs */
.tabs {
  height: 37.8px;
  display: grid;
  align-items: start;
  justify-items: start;
  padding-left: 25.5px;
  grid-template-columns: 56.9px 67.5px 64.7px 61.3px 112.1px 89px 56.1px 73.3px 58.3px 658.4px 131.2px auto;
  font-size: 15.15px;
}
.tabs a { height: 33.5px; line-height: 41px; }
.tabs .on { font-weight: 700; font-size: 14.6px; border-radius: 1px; box-shadow: inset 0 -2.5px #107c41; }
.btn-comments, .btn-share {
  height: 29.5px; margin-top: 4px; border-radius: 4px; display: flex; align-items: center; font-weight: 600; font-size: 14.6px;
}
.btn-comments { width: 121px; border: 1px solid #d4d4d4; background: #fff; padding-left: 9.6px; gap: 5.5px; font-size: 15.1px; }
.btn-share { width: 99px; background: #107c41; color: #fff; padding-left: 9.9px; gap: 5.8px; }
.btn-share span { width: 49.2px; text-align: left; }

/* ribbon */
.ribbon {
  position: relative; height: 121.6px; margin: 0 10px; border: 1px solid #d2d2d2; border-radius: 9px;
  background: #fff; display: flex; align-items: flex-start; padding: 4.9px 0 0 .6px;
}
.group { position: relative; flex: none; height: 109.4px; border-right: 1px solid #d4d4d4; }
.items { height: 97px; display: flex; align-items: flex-start; justify-content: center; }
.label { line-height: 16.4px; font-size: 12px; text-align: center; }
.big { flex: none; display: flex; flex-direction: column; align-items: center; }
.big .ico { position: relative; padding-top: 4.8px; height: 44.6px; }
.big .shift { left: 2px; }
.big .over { position: absolute; left: 0; top: 4.8px; }
.big p { height: 19.7px; line-height: 19.7px; display: flex; align-items: center; gap: 6px; position: relative; top: -.4px; }
.high .big p { top: -2.8px; }
.low p { top: 1px; }
.w100 { width: 100px; } .w90 { width: 90px; } .w80 { width: 80px; } .w70 { width: 70px; }
.w68 { width: 68px; } .w60 { width: 60px; } .w41 { width: 41px; } .w40 { width: 40px; }
.w100 p { font-size: 13.75px; }
.g-tables { width: 248.1px; }
.g-tables .items { justify-content: flex-start; padding-left: 8.8px; }
.g-tables .label { padding-right: 2px; }
.split { width: 70.5px; height: 93px; border: 1px solid #d0d0d0; border-radius: 4px; margin: -.6px 3.9px 0 0; }
.split .ico { width: 100%; background: #f4f4f4; border-bottom: 1px solid #d0d0d0; padding-left: 16.5px; }
.split .over { left: 16.5px; }
.g-tables .w41 { margin-left: 10px; }
.g-ill { width: 95.4px; }
.g-add { width: 66.5px; }
.g-charts { width: 405.6px; }
.g-charts .items { justify-content: flex-start; padding-left: 11.5px; }
.g-charts .label { padding-right: 20px; }
.smalls { margin: 4.2px .5px 0 9.8px; width: 154.2px; display: grid; grid-template-columns: repeat(3, 51.4px); grid-auto-rows: 31.8px; }
.smalls span { display: flex; gap: 6.5px; height: 20px; align-items: center; }
.g-charts .w68 { margin-left: 10px; }
.launch { position: absolute; right: 3px; bottom: 0; }
.g-tours { width: 70.2px; }
.g-spark { width: 119.7px; }
.g-filters { width: 112.5px; }
.rows.items { display: block; padding-left: 14.8px; }
.rows span { height: 31.8px; display: flex; align-items: center; gap: 5.5px; position: relative; top: -1.8px; font-size: 13.8px; }
.g-filters .rows span { font-size: 13.5px; gap: 5px; }
.g-links { width: 70.2px; }
.g-comm { width: 90px; }
.g-text { width: 66.1px; }
.g-sym { width: 76.7px; }
.collapse { position: absolute; left: 1523.5px; top: 100.7px; }

/* worksheet */
.sheet { position: relative; height: 313.4px; background: #fff; overflow: hidden; }
.row {
  display: grid; height: 25.3px; grid-template-rows: 100%;
  grid-template-columns: 32.3px 94px 134.5px 133.3px 156.7px 134.9px 116px 131.3px 78.5px 115.2px 154.9px 78.6px 78.4px 78.4px 26.2px;
}
.row.head { height: 46px; }
.row > * { min-height: 0; display: flex; align-items: flex-end; justify-content: center; border-right: 1px solid #e1e1e1; border-bottom: 1px solid #e1e1e1; text-decoration: none; text-align: center; }
.row > i {
  background: #e1e1e1; color: #217346; border-right-color: #ababab; border-bottom-color: #c8c8c8;
  font: 16.3px/20.8px "Lato", sans-serif;
}
.row > b, .row > em { background: #c6c6c6; border-color: #000; color: #000; }
.row > b { font: 19.4px/22.6px "Liberation Sans", Arial, sans-serif; }
.row > em { font: 16.6px/20.8px "Lato", sans-serif; }
.row.head > b { align-items: center; line-height: 25.3px; padding-bottom: 3px; }
.row > .num { justify-content: flex-end; padding-right: 11px; color: #1f3a6e; }
.row.empty { height: 24px; }
.row.empty > i { background: #f0f0f0; color: #444; }
.row > u:last-child { border-right-color: #ababab; }
.sel { position: absolute; left: 31.5px; top: -6px; width: 1251.5px; height: 281.2px; border: 1.5px solid #107040; border-bottom-width: 2px; box-shadow: inset 0 0 0 1px #f3f3f3; }
.sel span { position: absolute; right: -3px; bottom: -4px; width: 5.5px; height: 6px; background: #217346; border: 1px solid #fff; box-sizing: content-box; }
.vscroll { position: absolute; left: 1543.5px; top: 0; right: 0; bottom: 0; background: #f0f0f0; padding-left: 7.3px; display: flex; }
.vscroll span { width: 9.8px; background: #6e6e6e; }

/* screen tip */
.tip {
  position: absolute; left: 20.5px; top: 219.3px; width: 257px; height: 208.5px; background: #fff;
  border: 1px solid #c8c6c4; border-radius: 4px; box-shadow: 0 5px 8px rgba(0,0,0,.22); color: #666; font-size: 14.1px;
  padding: 7.2px 4px 0 4.2px;
}
.tip h4 { font-size: 13.6px; line-height: 20.4px; color: #505050; padding-left: 8px; margin-bottom: 12.400px; }
.tip p { line-height: 20.4px; padding-left: 8px; margin-bottom: 20.3px; }
.tip .more { margin-top: -13.7px; border-top: 1px solid #dcdcdc; display: flex; align-items: center; gap: 9.5px; padding: 8px 0 0 7px; color: #2b579a; font-weight: 700; font-size: 13.7px; }
.tip .more span { padding-top: 3px; }

/* fields pane */
.pane { position: absolute; left: 564.8px; top: 236.9px; width: 433.1px; height: 621.5px; background: #f5f5f5; font-size: 13.9px; }
.body { height: 598px; margin-left: 4px; border-left: 1px solid #d0d0d0; background: #f0f0f0; padding: 0 13.9px 0 15.8px; box-shadow: 0 1px #fff; }
.p-title { height: 37px; display: grid; grid-template-columns: 330.7px 49.8px auto; align-items: center; }
.p-title h2 { font-weight: 400; font-size: 23.9px; color: #107c41; margin-left: -2.5px; }
.p-title svg { margin-top: -2px; }
.p-choose { display: flex; justify-content: space-between; align-items: center; height: 33px; margin-top: 8.2px; font-size: 14.1px; }
.p-choose span { padding: 1.500px 0 0 .6px; }
.p-choose button { width: 54px; height: 33px; background: #fff; border: 1px solid #d0d0d0; display: flex; align-items: center; padding-left: 10.5px; gap: 7px; }
.p-search { margin-top: 16.6px; height: 29.2px; background: #fff; border: 1px solid #d0d0d0; display: flex; align-items: center; justify-content: space-between; padding: 0 3px 0 7px; color: #6e6e6e; font-size: 13.6px; }
.p-search svg { stroke: #222; stroke-width: 1.2; }
.p-list { margin-top: 20.7px; height: 150.8px; border: 1px solid #d0d0d0; background: #fff; display: flex; overflow: hidden; }
.p-list ul { flex: 1; }
.p-list li { height: 27px; display: flex; padding-left: 4px; gap: 6.7px; line-height: 24.4px; }
.p-list li i { width: 16.3px; height: 16.3px; border: 1.2px solid #7a7a7a; background: #fff; margin-top: 2.3px; }
.p-list .on { font-weight: 700; font-size: 13.5px; color: #111; outline: 2.7px solid #000; outline-offset: -2.7px; }
.p-list .on i { background: #107c41; border-color: #107c41; }
.p-list .on svg { margin: -1.2px; }
.p-list .bar { width: 21px; background: #f5f5f5; display: flex; flex-direction: column; align-items: center; padding-top: 6.5px; }
.p-list .bar span { width: 10.4px; height: 53px; background: #6e6e6e; margin: 6.7px 0 60.5px; }
.p-drag { margin: 24.5px 0 0 5px; line-height: 22px; font-size: 13.82px; height: 41px; }
.areas { margin-left: 3px; display: grid; grid-template-columns: 198px 1fr; grid-template-rows: 86.5px 87px; background: linear-gradient(#a5a5a5, #a5a5a5) 0 86px / 100% 1px no-repeat; }
.area { border-right: 1px solid #a5a5a5; padding-right: 7.2px; display: flex; flex-direction: column; }
.area.right { border: 0; padding: 0 0 0 2.4px; }
.area h5 { height: 26px; font-weight: 400; font-size: 13.7px; display: flex; align-items: flex-start; gap: 8.2px; line-height: 23.4px; padding-left: 5.3px; }
.area h5 svg { margin-top: 2.5px; }
.area:nth-child(n+3) h5 { height: 34px; padding-top: 7.5px; }
.area.right h5 { padding-left: 6.2px; gap: 7px; }
.drop { background: #fff; height: 52.4px; padding: 2px 1px; }
.chip { height: 28.8px; border: 1px solid #8c8c8c; background: #fff; display: flex; align-items: center; justify-content: space-between; padding: 2px 10px 0 9.5px; font-size: 13.85px; }
.p-defer { margin: 24px 0 0 6.8px; display: flex; align-items: center; height: 31.6px; }
.p-defer i { width: 16.2px; height: 16.2px; border: 1.2px solid #7a7a7a; border-radius: 2.5px; background: #fff; margin-right: 8.6px; }
.p-defer span { font-size: 13.8px; padding-top: 1px; }
.p-defer button { margin-left: auto; width: 60.5px; height: 31.6px; border: 1px solid #dcdcdc; color: #bdbdbd; padding-top: 1.500px; }
.status { display: flex; align-items: center; height: 22px; margin-top: 1.4px; padding: 1.8px 0 0 69px; }
.view { width: 49.3px; height: 20.200px; display: flex; align-items: center; justify-content: center; padding-top: 1px; }
.view.on { background: #e0e0e0; box-shadow: 0 -1.500px #e0e0e0; }
.zoomer { margin-left: 5.7px; margin-top: 1.5px; }
.pct { font-size: 12px; margin-left: 15.2px; margin-top: 2.500px; }

/* create dialog */
.dlg-wrap {
  position: absolute; left: 40px; top: 547px; width: 486.8px; height: 315.4px; overflow: hidden; display: flex;
  background:
    linear-gradient(#107040, #107040) 0 191px / 3px 2px no-repeat,
    repeating-linear-gradient(#000 0 1px, transparent 1px 25.34px) 0 14.5px / 3px 153px no-repeat,
    linear-gradient(#acacac 192px, #c8c8c8 192px);
}
.strip-top { position: absolute; left: 0; top: 0; width: 100%; height: 8px; background:
  linear-gradient(#000,#000) 104px 0 / 1px 5px no-repeat, linear-gradient(#000,#000) 220px 0 / 1px 5px no-repeat,
  linear-gradient(#000,#000) 351.5px 0 / 1px 5px no-repeat, linear-gradient(#000,#000) 430px 0 / 1px 5px no-repeat; }
.strip-top span { position: absolute; top: -12px; left: 386px; font: 16.6px/20px "Lato", sans-serif; color: #1a1a1a; }
.strip-top span + span { left: 460px; }
.dlg { position: relative; margin: 3.3px 0 0 3px; width: 484px; height: 312.500px; border-radius: 8px; background: #f0f0f0; overflow: hidden; box-shadow: 0 0 0 .4px #8a8a8a, 0 0 3px rgba(0,0,0,.4); font-size: 12.15px; color: #1a1a1a; display: flex; flex-direction: column; }
.d-title { height: 35px; flex: none; background: linear-gradient(90deg, #eef4f9, #f0f3fc 50%); display: grid; grid-template-columns: 387px 53.6px auto; align-items: center; padding: 0 0 1px 9px; font-size: 13.85px; }
.dlg h6 { font-weight: 400; font-size: 12.15px; line-height: 18px; padding: 0 3px 0 8.3px; display: flex; align-items: center; gap: 5.5px; flex: none; margin-right: 4px; }
.dlg h6::after { content: ""; flex: 1; height: 1px; background: #dadada; margin-top: -2px; }
.s1 { margin-top: 9.6px; }
.s2 { margin-top: 11.5px; }
.s3 { margin-top: 11.4px; }
.field { display: flex; flex: none; height: 21.6px; padding: 0 6.9px 0 20px; line-height: 24.800px; }
.f1 { margin-top: 7.500px; } .f1 label { width: 85.5px; }
.f2 { margin-top: 7.7px; } .f2 label { width: 62.7px; color: #777; }
.input { flex: 1; background: #fff; border: 1px solid #a8a8b0; display: flex; justify-content: space-between; padding-left: 2.3px; }
.input mark { background: #c6c6c6; color: #1a1a1a; height: 15.3px; line-height: 17.5px; margin-top: 2.4px; border-right: 1px solid #000; font-size: 12.4px; }
.input button { margin-left: auto; width: 22.5px; border: 1px solid #d0d0d0; border-radius: 3px; background: #fdfdfd; display: flex; align-items: center; justify-content: center; }
.opt { display: flex; align-items: center; height: 18px; gap: 8.2px; padding-left: 19px; flex: none; }
.opt span { padding-top: 2px; }
.o1 { margin-top: 12px; } .o2 { margin-top: 7.4px; } .o3 { margin-top: 7.8px; }
.radio, .check { width: 16.3px; height: 16.3px; border: 1px solid #666; border-radius: 50%; background: #f6f6f6; }
.radio.on { border: 5px solid #005fb8; background: #fff; }
.check { border-radius: 3px; background: #fcfcfc; }
.acts { display: flex; gap: 13.5px; justify-content: flex-end; padding-right: 7.6px; margin-top: 14.5px; flex: none; }
.acts button { width: 90.5px; height: 27.7px; border: 1px solid #d0d0d0; border-radius: 3.5px; background: #fdfdfd; padding-top: 1px; }
.acts .ok { border-color: #0078d4; background: #e0eef9; }
.grip { position: absolute; right: 0; bottom: 1px; }

/* pivot result */
.result { position: absolute; left: 1036px; top: 564.6px; width: 532px; height: 228.7px; overflow: hidden; font-family: "Lato", sans-serif; font-size: 25.3px; color: #000; }
.r { display: grid; grid-template-rows: 100%; grid-template-columns: 52.3px 179px 275.1px auto; height: 38.3px; line-height: 40.2px; }
.r2 { height: 11.1px; line-height: 0; }
.r > * { min-height: 0; text-decoration: none; border-bottom: 1px solid transparent; }
.r > i { background: #f0f0f0; color: #444; text-align: center; border-right: 1px solid #9a9a9a; border-bottom-color: #d4d4d4; }
.r > i.g { background: #e1e1e1; color: #217346; border-bottom-color: #b5b5b5; }
.r > s { border-bottom-color: #dcdcdc; border-left: 1px solid #e1e1e1; }
.r > b { padding-left: 4.3px; }
.r > b + b { text-align: right; padding: 0 6px 0 0; }
.hd > b, .tot > b { background: #d9e1f2; font-weight: 700; font-size: 25.9px; letter-spacing: .5px; }
.hd > b + b { text-align: left; padding-left: 4px; letter-spacing: .82px; }
.tot > b { letter-spacing: 1.1px; }
.tot > b + b { letter-spacing: 0; }
.hd > b { border-bottom: 1px solid #8ea9db; }
.tot > b { box-shadow: 0 -1px #8ea9db; }
.r2 > b:first-of-type, .lined > b:first-of-type { border-right: 1px solid #e1e1e1; }
.cell-sel { position: absolute; left: 50px; top: 9.3px; width: 183px; height: 42px; border: 2px solid #107040; box-shadow: inset 0 0 0 1.5px #fff; display: flex; justify-content: flex-end; padding: 3.5px 1.5px 2.5px 0; }
.dd { width: 32px; border: 1px solid #a5a5a5; border-right: 0; background: linear-gradient(#fff, #eef1f6); display: flex; align-items: center; justify-content: center; }
.cell-sel span { position: absolute; right: -3px; bottom: -3px; width: 7.5px; height: 7.5px; background: #217346; outline: 1px solid #fff; }

/* step markers */
.badge { position: absolute; display: grid; place-items: center; color: #fff; font: 26px/1 "Lato", sans-serif; }
.badge > * { grid-area: 1 / 1; }
.badge span { padding-bottom: 1px; }
.n1 { left: 1301.3px; top: 314.1px; }
.n2 { left: 57.7px; top: 133.6px; }
.n3 { left: 367.4px; top: 763px; }
.n4 { left: 934.3px; top: 550.4px; }
.n5 { left: 1399.6px; top: 774.2px; }
```
